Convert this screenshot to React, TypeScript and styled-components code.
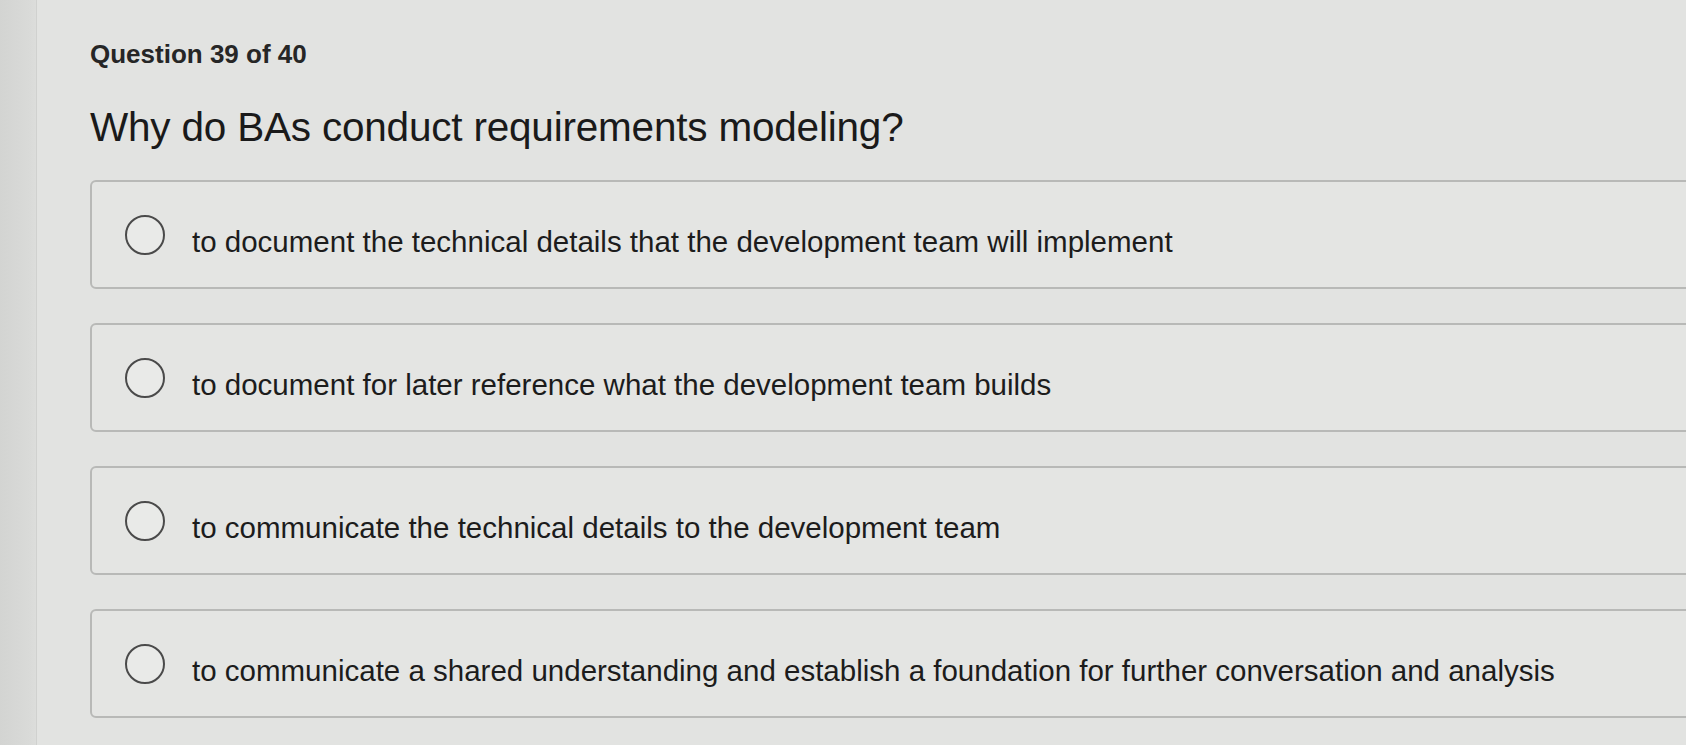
import React from "react";
import styled, { createGlobalStyle } from "styled-components";

const GlobalStyle = createGlobalStyle`
  html, body {
    margin: 0;
    padding: 0;
    background: #e1e2e0;
    overflow: hidden;
  }
  body {
    font-family: "Liberation Sans", Arial, sans-serif;
    color: #1d1d1f;
  }
`

const Screen = styled.div`
  display: flex;
  width: 1686px;
  height: 745px;
  overflow: hidden;
  background: #e2e3e1;
`

const EdgeStrip = styled.div`
  flex: 0 0 36px;
  background: linear-gradient(90deg, #d3d4d2 0%, #d9dad8 80%, #dcdddb 100%);
  border-right: 1px solid #d0d1cf;
`

const Content = styled.div`
  flex: 1;
  padding: 38px 0 0 53px;
  min-width: 0;
`

const Counter = styled.div`
  font-size: 26px;
  font-weight: 700;
  line-height: 32px;
  color: #262626;
`

const QuestionTitle = styled.h1`
  margin: 33px 0 29px;
  font-size: 40.5px;
  font-weight: 400;
  line-height: 48px;
  letter-spacing: -0.2px;
  color: #1a1a1a;
`

const Options = styled.div`
  display: flex;
  flex-direction: column;
  gap: 34px;
  margin-right: -40px;
`

const Option = styled.label`
  display: flex;
  align-items: center;
  gap: 27px;
  height: 109px;
  box-sizing: border-box;
  padding: 0 0 0 33px;
  border: 2px solid #b8b9b7;
  border-radius: 6px;
  background: #e4e5e3;
  cursor: pointer;
`

const Radio = styled.span`
  flex: 0 0 auto;
  width: 40px;
  height: 40px;
  box-sizing: border-box;
  border: 2.5px solid #4a4a4a;
  border-radius: 50%;
  background: #e9eae8;
`

const OptionText = styled.span`
  font-size: 29.5px;
  line-height: 36px;
  color: #1c1c1c;
  margin-top: 14px;
`

const answers = [
  "to document the technical details that the development team will implement",
  "to document for later reference what the development team builds",
  "to communicate the technical details to the development team",
  "to communicate a shared understanding and establish a foundation for further conversation and analysis",
];

const App: React.FC = () => {
  return (
    <>
      <GlobalStyle />
      <Screen>
        <EdgeStrip />
        <Content>
          <Counter>Question 39 of 40</Counter>
          <QuestionTitle>Why do BAs conduct requirements modeling?</QuestionTitle>
          <Options>
            {answers.map((a) => (
              <Option key={a}>
                <Radio />
                <OptionText>{a}</OptionText>
              </Option>
            ))}
          </Options>
        </Content>
      </Screen>
    </>
  );
};

export default App;
